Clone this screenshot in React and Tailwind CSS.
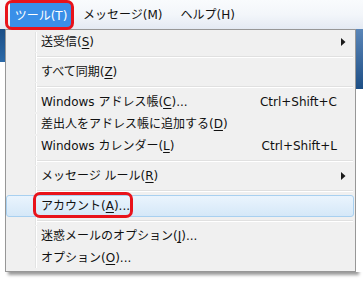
import React from 'react'

const items = [
  { label: '送受信', key: 'S', sub: true },
  'sep',
  { label: 'すべて同期', key: 'Z' },
  'sep',
  { label: 'Windows アドレス帳', key: 'C', dots: true, shortcut: 'Ctrl+Shift+C' },
  { label: '差出人をアドレス帳に追加する', key: 'D' },
  { label: 'Windows カレンダー', key: 'L', shortcut: 'Ctrl+Shift+L' },
  'sep',
  { label: 'メッセージ ルール', key: 'R', sub: true },
  'sep',
  { label: 'アカウント', key: 'A', dots: true, active: true },
  'sep',
  { label: '迷惑メールのオプション', key: 'J', dots: true },
  { label: 'オプション', key: 'O', dots: true },
]

function Arrow() {
  return (
    <svg width="5" height="8" viewBox="0 0 5 8">
      <path d="M0 0 L4.5 4 L0 8 Z" fill="#1a1a1a" />
    </svg>
  )
}

function Separator() {
  return (
    <div className="flex h-[8px]">
      <div className="w-[30px] border-r border-[#e2e3e3]" />
      <div className="w-[1px] bg-white" />
      <div className="flex-1 flex flex-col justify-center pr-[2px]">
        <div className="h-[1px] bg-[#e0e0e0]" />
        <div className="h-[1px] bg-white" />
      </div>
    </div>
  )
}

function Item({ item }) {
  const label = (
    <span>
      {item.label}(<span className="underline underline-offset-[2px]">{item.key}</span>){item.dots ? '...' : ''}
    </span>
  )
  return (
    <div
      className={
        'relative flex h-[22px] items-center mr-[1px] ' +
        (item.active
          ? 'rounded-[3px] border border-[#a8d0f0] bg-gradient-to-b from-[#eaf4fd] to-[#d5e8f8]'
          : 'border border-transparent')
      }
    >
      <div
        className={
          'h-full w-[29px] shrink-0 ' + (item.active ? '' : 'border-r border-[#e2e3e3]')
        }
      />
      <div className={'h-full w-[1px] shrink-0 ' + (item.active ? '' : 'bg-white')} />
      <div className="flex-1 pl-[4px] leading-none whitespace-nowrap">{label}</div>
      <div className="w-[110px] shrink-0 flex items-center justify-end pr-[16px] whitespace-nowrap">
        {item.shortcut && <span className="leading-none">{item.shortcut}</span>}
        {item.sub && (
          <div className="mr-[-9px]">
            <Arrow />
          </div>
        )}
      </div>
      {item.active && (
        <div className="absolute left-[26px] top-[-4px] w-[100px] h-[26px] rounded-[7px] border-[3px] border-[#e8131b]" />
      )}
    </div>
  )
}

export default function App() {
  return (
    <div
      className="w-[363px] h-[281px] overflow-hidden bg-white text-[12px] text-[#111]"
      style={{ fontFamily: '"DejaVu Sans", "Noto Sans CJK JP", sans-serif' }}
    >
      <div className="h-[29px] flex items-stretch bg-gradient-to-b from-[#f9fbfd] via-[#f3f6fa] to-[#e4eaf3]">
        <div className="relative ml-[10px] mt-[3px] mb-[1px] w-[62px] bg-[#3a8fe8] text-white flex items-center justify-center">
          ツール(T)
          <div className="absolute left-[-5px] top-[-3px] w-[69px] h-[30px] rounded-[7px] border-[3px] border-[#e8131b]" />
        </div>
        <div className="ml-[11px] flex items-center">メッセージ(M)</div>
        <div className="ml-[18px] flex items-center">ヘルプ(H)</div>
      </div>

      <div className="flex">
        <div className="w-[5px] flex flex-col">
          <div className="h-[33px] bg-gradient-to-b from-[#1d4f86] to-[#2c6aa8]" />
          <div className="flex-1 bg-white" />
        </div>
        <div className="w-[351px] h-[243px] bg-[#f0f0f0] border border-[#979797] py-[1px] shadow-[3px_3px_3px_rgba(0,0,0,0.4)]">
          {items.map((it, i) =>
            it === 'sep' ? <Separator key={i} /> : <Item key={i} item={it} />
          )}
        </div>
        <div className="flex-1 flex flex-col">
          <div className="h-[60px] bg-gradient-to-b from-[#5a86b8] to-[#1d4f86]" />
          <div className="flex-1 bg-white" />
        </div>
      </div>
    </div>
  )
}
